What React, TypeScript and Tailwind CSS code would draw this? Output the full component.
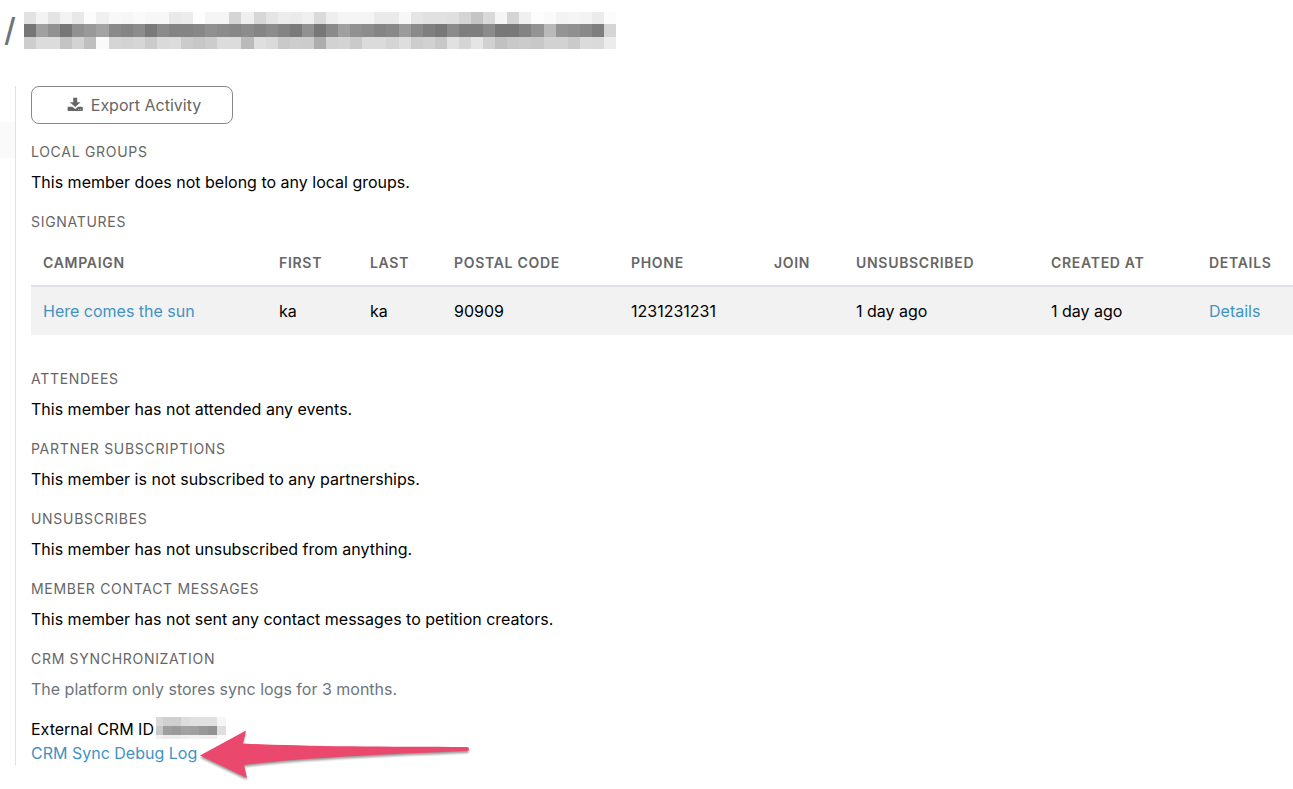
import React from 'react';

const titleMask = [
  'e2 f3 e4 f3 e8 fc f0 f8 f6 fa f7 f7 e9 ec fd f5 f5 d5 ef d7 e5 ed eb f0 da ee f5 f5 f5 ea ea f7 e5 e1 e1 df d4 c5 d9 f5 d4 f0 fd fa f3 f5 f3 eb fc',
  '76 a0 91 77 91 99 a3 8a 85 8c 7a 8b 84 84 87 90 8b 87 8c 85 8c 84 7a 91 77 8a a0 91 8d 85 89 9b 8a 7f 78 8b 7e 7e 8b 78 78 83 93 b9 94 90 89 7e d5',
  'cd dc dc c4 d3 bf fa d5 d3 d6 cb da dc cb c7 cc dc dc ba df da c9 cd cc ad d2 d4 ca db db d5 de cd d1 c8 e1 d5 e5 d1 c1 c8 cb c8 d2 d2 ca db da ec',
];

const idMask = [
  'd8 d0 cf dd e0 e0 e0 f6',
  'c8 9e 9a a2 a0 98 92 de',
  'f0 ec ec f0 f2 f0 f0 fa',
];

const columns = [
  { title: 'Campaign', width: 'w-[236px]' },
  { title: 'First', width: 'w-[91px]' },
  { title: 'Last', width: 'w-[84px]' },
  { title: 'Postal Code', width: 'w-[177px]' },
  { title: 'Phone', width: 'w-[143px]' },
  { title: 'Join', width: 'w-[82px]' },
  { title: 'Unsubscribed', width: 'w-[195px]' },
  { title: 'Created At', width: 'w-[158px]' },
  { title: 'Details', width: 'w-auto' },
];

const sections = [
  { title: 'Attendees', text: 'This member has not attended any events.' },
  { title: 'Partner Subscriptions', text: 'This member is not subscribed to any partnerships.' },
  { title: 'Unsubscribes', text: 'This member has not unsubscribed from anything.' },
  {
    title: 'Member Contact Messages',
    text: 'This member has not sent any contact messages to petition creators.',
  },
];

// Pixelated strip that hides personal data
const Mask = ({ rows, viewBox, className }: { rows: string[]; viewBox: string; className: string }) => (
  <svg
    className={className}
    viewBox={viewBox}
    preserveAspectRatio="none"
    shapeRendering="crispEdges"
    aria-hidden="true"
  >
    {rows.map((row, y) =>
      row.split(' ').map((shade, x) => (
        <rect key={`${x}-${y}`} x={x} y={y} width="1" height="1" fill={`#${shade}${shade}${shade}`} />
      ))
    )}
  </svg>
);

const SectionTitle = ({ children }: { children: React.ReactNode }) => (
  <h2 className="text-[14px] leading-6 tracking-wider uppercase text-[#666]">{children}</h2>
);

const Section = ({ title, text, muted }: { title: string; text: string; muted?: boolean }) => (
  <section className="mb-4">
    <SectionTitle>{title}</SectionTitle>
    <p className={muted ? 'mt-1.5 text-[#6c757d]' : 'mt-1.5'}>{text}</p>
  </section>
);

const App = () => {
  return (
    <div className="font-['Inter','Liberation_Sans',sans-serif] text-base leading-6 text-black bg-white pb-6 overflow-x-clip">
      <header className="flex items-start pt-3 pl-1 mb-[37px]">
        <span className="w-5 text-[32px] leading-9 font-medium text-[#6c757d]">/</span>
        <Mask rows={titleMask} viewBox="0 0 49 3" className="w-[592px] h-[37px]" />
      </header>

      <div className="flex">
        <aside className="w-[15px] shrink-0 pt-9">
          <div className="h-9 bg-[#fafafa]" />
        </aside>

        <main className="grow min-w-0 border-l border-[#dee2e6] pl-[15px]">
          <button
            type="button"
            className="flex items-center justify-center gap-2 w-[202px] h-[38px] pl-1 mb-4 border border-[#888] rounded-lg text-[#666]"
          >
            <svg className="w-4 h-4" viewBox="0 0 16 16" fill="currentColor" aria-hidden="true">
              <path d="M6.200.8h4v4.400h3.400L8.200 10 2.800 5.200h3.400z" />
              <path
                fillRule="evenodd"
                d="M1.400 9.800h4L8.200 12l2.800-2.200h4c.5 0 .8.3.8.8v2.600c0 .5-.3.8-.8.8H1.400a.8.8 0 0 1-.8-.8v-2.600c0-.5.3-.8.8-.8zM11.300 12.200v.7h.8v-.7zm2 0v.7h.8v-.7z"
              />
            </svg>
            Export Activity
          </button>

          <Section title="Local Groups" text="This member does not belong to any local groups." />

          <section className="mb-8">
            <SectionTitle>Signatures</SectionTitle>
            <table className="mt-[5px] w-full table-fixed border-separate border-spacing-0 text-left">
              <thead>
                <tr>
                  {columns.map((column) => (
                    <th
                      key={column.title}
                      className={`${column.width} px-3 pt-3 pb-2.5 border-b-2 border-[#dee2e6] text-[14px] leading-6 font-semibold tracking-wider uppercase whitespace-nowrap text-[#666]`}
                    >
                      {column.title}
                    </th>
                  ))}
                </tr>
              </thead>
              <tbody>
                <tr className="bg-[#f2f2f2]">
                  <td className="p-3"><a href="#campaign" className="text-[#3f92c3]">Here comes the sun</a></td>
                  <td className="p-3">ka</td>
                  <td className="p-3">ka</td>
                  <td className="p-3">90909</td>
                  <td className="p-3">1231231231</td>
                  <td className="p-3"></td>
                  <td className="p-3">1 day ago</td>
                  <td className="p-3">1 day ago</td>
                  <td className="p-3"><a href="#details" className="text-[#3f92c3]">Details</a></td>
                </tr>
              </tbody>
            </table>
          </section>

          {sections.map((section) => (
            <Section key={section.title} title={section.title} text={section.text} />
          ))}

          <Section title="CRM Synchronization" text="The platform only stores sync logs for 3 months." muted />

          <div className="flex items-start gap-0.5">
            External CRM ID
            <Mask rows={idMask} viewBox="0.22 0 7.78 2.44" className="w-[70px] h-[22px]" />
          </div>
          <div className="relative w-fit">
            <a href="#crm-sync-log" className="text-[#3f92c3]">CRM Sync Debug Log</a>
            {/* Callout arrow */}
            <svg
              className="absolute left-full -top-3 ml-px w-[276px] h-[54px] drop-shadow-[0_2px_1px_rgba(0,0,0,0.4)]"
              viewBox="0 0 276 54"
              fill="#eb486d"
              aria-hidden="true"
            >
              <path d="M2 26.500 48 1.500 45 14.500C100 17.500 190 18 269 18Q271 18 271 20T269 22C190 25 100 29 46 36L49 49Z" />
            </svg>
          </div>
        </main>
      </div>
    </div>
  );
};

export default App;
